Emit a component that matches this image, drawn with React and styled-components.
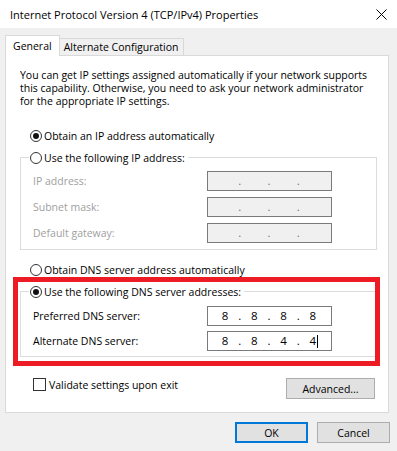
import React from 'react';
import styled, { createGlobalStyle } from 'styled-components';

const GlobalStyle = createGlobalStyle`
  html, body {
    margin: 0;
    padding: 0;
    background: #ffffff;
  }
  body {
    font-family: 'Open Sans', 'Noto Sans', sans-serif;
    font-size: 10.5px;
    color: #000000;
    white-space: nowrap;
  }
`;

const Dialog = styled.div`
  width: 397px;
  height: 451px;
  display: flex;
  flex-direction: column;
  background: #f0f0f0;
  overflow: hidden;
`;

const TitleBar = styled.div`
  height: 28px;
  flex-shrink: 0;
  background: #ffffff;
  display: flex;
  align-items: center;
  justify-content: space-between;
  padding: 0 10px;
  font-size: 11px;
`;

const Body = styled.div`
  flex: 1;
  display: flex;
  flex-direction: column;
  padding: 7px 8px 0 5px;
`;

const TabRow = styled.div`
  display: flex;
  align-items: flex-end;
  height: 20px;
`;

const Tab = styled.div`
  display: flex;
  align-items: center;
  box-sizing: border-box;
  border: 1px solid #d9d9d9;
  border-bottom: none;
  height: ${(p) => (p.$active ? '21px' : '17px')};
  padding: ${(p) => (p.$active ? '0 7px' : '0 4px')};
  background: ${(p) => (p.$active ? '#ffffff' : '#f0f0f0')};
  margin-bottom: ${(p) => (p.$active ? '-1px' : '0')};
  border-left: ${(p) => (p.$active ? '1px solid #d9d9d9' : 'none')};
  position: relative;
  z-index: ${(p) => (p.$active ? 1 : 0)};
`;

const Panel = styled.div`
  box-sizing: border-box;
  height: 358px;
  border: 1px solid #d9d9d9;
  background: #ffffff;
  padding: 13px 11px 0 14px;
  display: flex;
  flex-direction: column;
`;

const Intro = styled.p`
  margin: 0;
  line-height: 13px;
`;

const OptionRow = styled.label`
  display: flex;
  align-items: center;
  gap: 2px;
  height: 15px;
  margin: ${(p) => p.$margin || '0'};
  color: #000000;
`;

const RadioDot = styled.span`
  box-sizing: border-box;
  width: 12px;
  height: 12px;
  border: 1px solid #333333;
  border-radius: 50%;
  background: #ffffff;
  display: flex;
  align-items: center;
  justify-content: center;

  &::after {
    content: '';
    width: 6px;
    height: 6px;
    border-radius: 50%;
    background: ${(p) => (p.$checked ? '#111111' : 'transparent')};
  }
`;

const CheckBox = styled.span`
  box-sizing: border-box;
  width: 13px;
  height: 13px;
  border: 1px solid #333333;
  background: #ffffff;
  margin-right: 1px;
`;

const Group = styled.fieldset`
  margin: ${(p) => p.$margin || '0'};
  padding: 0;
  border: 1px solid #dcdcdc;
  min-width: 0;
`;

const Legend = styled.legend`
  margin-left: 8px;
  padding: 0 3px 0 1px;
`;

const FieldGrid = styled.div`
  display: grid;
  grid-template-columns: 174px 125px;
  row-gap: ${(p) => p.$gap || '6px'};
  padding: ${(p) => p.$padding || '6px 0 6px 12px'};
  align-items: center;
`;

const FieldLabel = styled.span`
  color: ${(p) => (p.$disabled ? '#a0a0a0' : '#000000')};
`;

const IpBox = styled.div`
  box-sizing: border-box;
  height: 20px;
  border: 1px solid #7a7a7a;
  background: ${(p) => (p.$disabled ? '#f0f0f0' : '#ffffff')};
  display: grid;
  grid-template-columns: 22px 7.3px 22px 7.3px 22px 7.3px 22px;
  padding-left: 6px;
  align-items: center;
  font-size: 11.5px;
`;

const Octet = styled.span`
  text-align: center;
  line-height: 18px;
`;

const Dot = styled.span`
  text-align: center;
  line-height: 18px;
  color: ${(p) => (p.$disabled ? '#707080' : '#000000')};
`;

const Caret = styled.span`
  display: inline-block;
  width: 1px;
  height: 13px;
  background: #000000;
  vertical-align: middle;
  margin-left: 1px;
  margin-right: -2px;
`;

const DnsSection = styled.div`
  position: relative;
  margin-top: 7px;
`;

const RedFrame = styled.div`
  position: absolute;
  top: -7px;
  left: -7px;
  right: -3px;
  bottom: -9px;
  border: 5px solid #ed1c24;
  pointer-events: none;
`;

const Footer = styled.div`
  display: flex;
  justify-content: space-between;
  align-items: flex-start;
  margin-top: 21px;
`;

const Button = styled.button`
  box-sizing: border-box;
  font-family: inherit;
  font-size: 10.5px;
  color: #000000;
  background: #e1e1e1;
  border: ${(p) => (p.$default ? '2px solid #0078d7' : '1px solid #adadad')};
  width: ${(p) => p.$width || '73px'};
  height: 21px;
  padding: 0;
  margin: 0;
`;

const ButtonRow = styled.div`
  display: flex;
  justify-content: flex-end;
  gap: 9px;
  margin: 9px -1px 0 0;
`;

function CloseIcon() {
  return (
    <svg width="11" height="11" viewBox="0 0 11 11">
      <path d="M0.5 0.5 L10.5 10.5 M10.5 0.5 L0.5 10.5" stroke="#000" strokeWidth="1" />
    </svg>
  );
}

function IpField({ value, disabled, caret }) {
  const parts = value ? value.split('.') : ['', '', '', ''];
  return (
    <IpBox $disabled={disabled}>
      {parts.map((p, i) => (
        <React.Fragment key={i}>
          <Octet>
            {p}
            {caret && i === 3 && <Caret />}
          </Octet>
          {i < 3 && <Dot $disabled={disabled}>.</Dot>}
        </React.Fragment>
      ))}
    </IpBox>
  );
}

export default function App() {
  return (
    <>
      <GlobalStyle />
      <Dialog>
        <TitleBar>
          <span>Internet Protocol Version 4 (TCP/IPv4) Properties</span>
          <CloseIcon />
        </TitleBar>
        <Body>
          <TabRow>
            <Tab $active>General</Tab>
            <Tab>Alternate Configuration</Tab>
          </TabRow>
          <Panel>
            <Intro>
              You can get IP settings assigned automatically if your network supports
              <br />
              this capability. Otherwise, you need to ask your network administrator
              <br />
              for the appropriate IP settings.
            </Intro>

            <OptionRow $margin="20px 0 0 10px">
              <RadioDot $checked />
              Obtain an IP address automatically
            </OptionRow>

            <Group $margin="7px 0 0 0">
              <Legend>
                <OptionRow>
                  <RadioDot />
                  Use the following IP address:
                </OptionRow>
              </Legend>
              <FieldGrid>
                <FieldLabel $disabled>IP address:</FieldLabel>
                <IpField disabled />
                <FieldLabel $disabled>Subnet mask:</FieldLabel>
                <IpField disabled />
                <FieldLabel $disabled>Default gateway:</FieldLabel>
                <IpField disabled />
              </FieldGrid>
            </Group>

            <OptionRow $margin="12px 0 0 10px">
              <RadioDot />
              Obtain DNS server address automatically
            </OptionRow>

            <DnsSection>
              <Group>
                <Legend>
                  <OptionRow>
                    <RadioDot $checked />
                    Use the following DNS server addresses:
                  </OptionRow>
                </Legend>
                <FieldGrid $padding="7px 0 5px 12px" $gap="5px">
                  <FieldLabel>Preferred DNS server:</FieldLabel>
                  <IpField value="8.8.8.8" />
                  <FieldLabel>Alternate DNS server:</FieldLabel>
                  <IpField value="8.8.4.4" caret />
                </FieldGrid>
              </Group>
              <RedFrame />
            </DnsSection>

            <Footer>
              <OptionRow $margin="-1px 0 0 13px">
                <CheckBox />
                Validate settings upon exit
              </OptionRow>
              <Button $width="89px" style={{ marginRight: 2 }}>
                Advanced...
              </Button>
            </Footer>
          </Panel>
          <ButtonRow>
            <Button $default>OK</Button>
            <Button>Cancel</Button>
          </ButtonRow>
        </Body>
      </Dialog>
    </>
  );
}
